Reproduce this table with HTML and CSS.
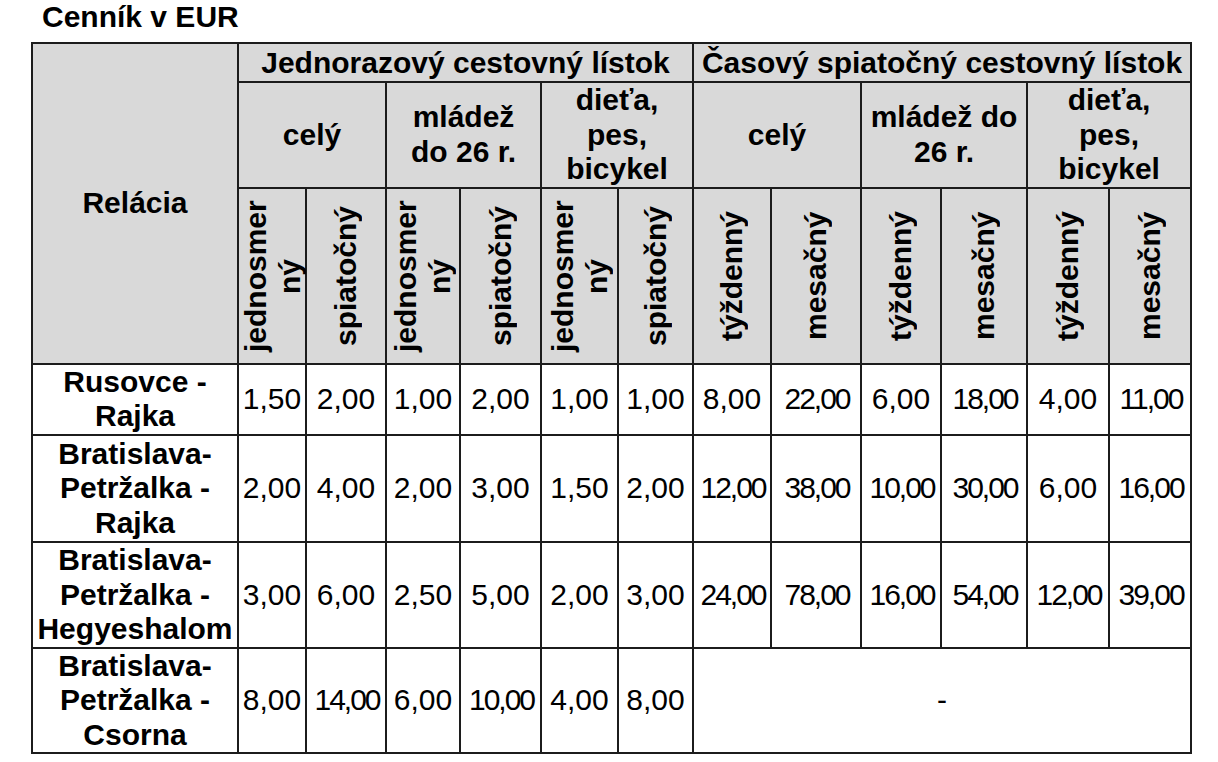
FILE: index.html
```html
<!DOCTYPE html>
<html lang="sk">
<head>
<meta charset="utf-8">
<title>Cenník v EUR</title>
<link rel="stylesheet" href="styles.css">
</head>
<body>
<h1 class="title">Cenník v EUR</h1>
<table class="price">
  <colgroup>
    <col class="c-rel">
    <col class="c68"><col class="c80"><col class="c74"><col class="c81"><col class="c77"><col class="c75">
    <col class="c78"><col class="c90"><col class="c80"><col class="c86"><col class="c82"><col class="c82">
  </colgroup>
  <thead>
    <tr class="h1">
      <th rowspan="3">Relácia</th>
      <th colspan="6">Jednorazový cestovný lístok</th>
      <th colspan="6">Časový spiatočný cestovný lístok</th>
    </tr>
    <tr class="h2">
      <th colspan="2">celý</th>
      <th colspan="2">mládež<br>do 26 r.</th>
      <th colspan="2">dieťa,<br>pes,<br>bicykel</th>
      <th colspan="2">celý</th>
      <th colspan="2">mládež do<br>26 r.</th>
      <th colspan="2">dieťa,<br>pes,<br>bicykel</th>
    </tr>
    <tr class="h3">
      <th><div class="vert">jednosmer<br>ný</div></th>
      <th><div class="vert">spiatočný</div></th>
      <th><div class="vert">jednosmer<br>ný</div></th>
      <th><div class="vert">spiatočný</div></th>
      <th><div class="vert">jednosmer<br>ný</div></th>
      <th><div class="vert">spiatočný</div></th>
      <th><div class="vert">týždenný</div></th>
      <th><div class="vert">mesačný</div></th>
      <th><div class="vert">týždenný</div></th>
      <th><div class="vert">mesačný</div></th>
      <th><div class="vert">týždenný</div></th>
      <th><div class="vert">mesačný</div></th>
    </tr>
  </thead>
  <tbody>
    <tr class="r2">
      <th>Rusovce -<br>Rajka</th>
      <td>1,50</td><td>2,00</td><td>1,00</td><td>2,00</td><td>1,00</td><td>1,00</td>
      <td>8,00</td><td class="w">22,00</td><td>6,00</td><td class="w">18,00</td><td>4,00</td><td class="w">11,00</td>
    </tr>
    <tr class="r3 r3a">
      <th>Bratislava-<br>Petržalka -<br>Rajka</th>
      <td>2,00</td><td>4,00</td><td>2,00</td><td>3,00</td><td>1,50</td><td>2,00</td>
      <td class="w">12,00</td><td class="w">38,00</td><td class="w">10,00</td><td class="w">30,00</td><td>6,00</td><td class="w">16,00</td>
    </tr>
    <tr class="r3">
      <th>Bratislava-<br>Petržalka -<br>Hegyeshalom</th>
      <td>3,00</td><td>6,00</td><td>2,50</td><td>5,00</td><td>2,00</td><td>3,00</td>
      <td class="w">24,00</td><td class="w">78,00</td><td class="w">16,00</td><td class="w">54,00</td><td class="w">12,00</td><td class="w">39,00</td>
    </tr>
    <tr class="r3">
      <th>Bratislava-<br>Petržalka -<br>Csorna</th>
      <td>8,00</td><td class="w">14,00</td><td>6,00</td><td class="w">10,00</td><td>4,00</td><td>8,00</td>
      <td colspan="6">-</td>
    </tr>
  </tbody>
</table>
</body>
</html>
```
FILE: styles.css
```css
html, body {
  margin: 0;
  padding: 0;
  background: #ffffff;
}

body {
  font-family: "Liberation Sans", Arial, sans-serif;
  color: #000000;
}

.title {
  margin: 0;
  padding-left: 42px;
  font-size: 30px;
  line-height: 34.5px;
  font-weight: bold;
}

.price {
  margin: 7px 0 0 31px;
  border-collapse: collapse;
  table-layout: fixed;
  width: 1159px;
  font-size: 30px;
  line-height: 34.5px;
}

.price th,
.price td {
  border: 2px solid #1c1c1c;
  padding: 0 1px;
  text-align: center;
  vertical-align: middle;
  white-space: nowrap;
}

.price thead th {
  background: #d9d9d9;
  font-weight: bold;
}

.price tbody th {
  font-weight: bold;
  background: #ffffff;
}

.price td {
  font-weight: normal;
}

.price td.w {
  letter-spacing: -2px;
  text-indent: 2px;
}

.c-rel { width: 206px; }
.c68 { width: 68px; }
.c74 { width: 74px; }
.c75 { width: 75px; }
.c77 { width: 77px; }
.c78 { width: 78px; }
.c80 { width: 80px; }
.c81 { width: 81px; }
.c82 { width: 82px; }
.c86 { width: 86px; }
.c90 { width: 90px; }

.h1 th {
  padding-top: 2px;
  padding-bottom: 1px;
}

.h3 th {
  padding: 1px 0;
}

.vert {
  display: inline-block;
  writing-mode: vertical-rl;
  transform: rotate(180deg);
  height: 172px;
  line-height: 34px;
  white-space: nowrap;
  text-align: center;
  vertical-align: middle;
}

.r3a th,
.r3a td {
  padding-top: 1px;
  padding-bottom: 1px;
}
```
